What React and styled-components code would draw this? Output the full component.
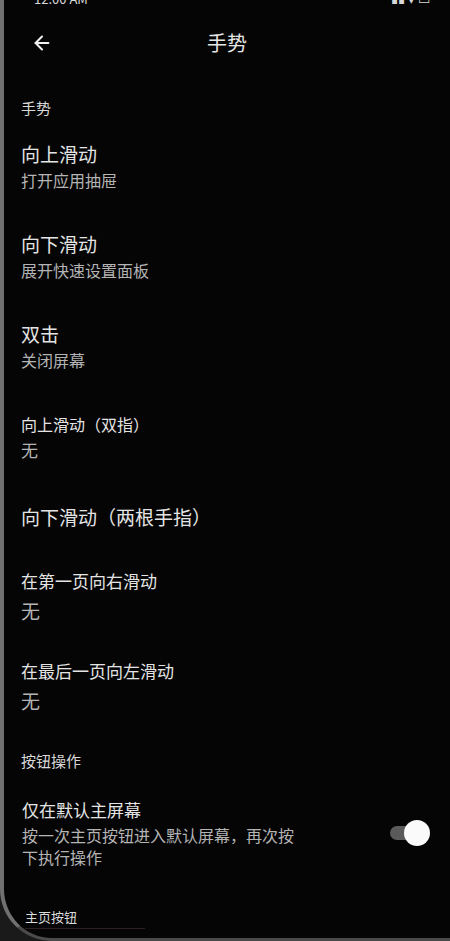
import styled, { createGlobalStyle } from "styled-components";
import { ArrowLeft } from "lucide-react";

const Global = createGlobalStyle`
  html, body {
    margin: 0;
    padding: 0;
    background: #1a1a1a;
  }
  * {
    box-sizing: border-box;
  }
`;

const Frame = styled.div`
  width: 450px;
  height: 941px;
  overflow: hidden;
  background: #050505;
  border-left: 4px solid #707070;
  border-bottom: 3px solid #4a4a4a;
  border-bottom-left-radius: 52px;
  font-family: "Noto Sans CJK SC", "Noto Sans", sans-serif;
  color: #e2e2e2;
  display: flex;
  flex-direction: column;
`;

// status bar is mostly cut off at the top of the shot
const StatusBar = styled.div`
  height: 4px;
  overflow: hidden;
  display: flex;
  align-items: flex-end;
  justify-content: space-between;
  padding: 0 20px 0 30px;
  font-size: 13px;
  line-height: 11px;
  color: #d8d8d8;
`;

const Header = styled.div`
  height: 77px;
  display: grid;
  grid-template-columns: 80px 1fr 80px;
  align-items: center;
`;

const BackButton = styled.div`
  display: flex;
  align-items: center;
  padding-left: 27px;
  color: #f0f0f0;
`;

const Title = styled.div`
  text-align: center;
  font-size: 20px;
  color: #e6e6e6;
`;

const SectionLabel = styled.div`
  padding: 0 17px;
  margin-top: ${(p) => p.$top}px;
  font-size: 15px;
  line-height: 20px;
  color: #d8d8d8;
`;

const Item = styled.div`
  display: flex;
  align-items: center;
  padding: ${(p) => p.$pad || "20px 20px 20px 17px"};
`;

const Texts = styled.div`
  flex: 1;
  display: flex;
  flex-direction: column;
`;

const ItemTitle = styled.div`
  font-size: ${(p) => p.$size || 19}px;
  line-height: 26px;
  color: #e4e4e4;
`;

const ItemSub = styled.div`
  margin-top: ${(p) => p.$gap ?? 2}px;
  font-size: ${(p) => p.$size || 16}px;
  line-height: 22px;
  color: #b4b4b4;
  max-width: ${(p) => p.$max || "none"};
`;

const Toggle = styled.div`
  position: relative;
  width: 40px;
  height: 26px;
  flex-shrink: 0;
  display: flex;
  align-items: center;
`;

const Track = styled.div`
  width: 34px;
  height: 14px;
  border-radius: 7px;
  background: #5a5a5a;
`;

const Knob = styled.div`
  position: absolute;
  right: 0;
  top: 0;
  width: 26px;
  height: 26px;
  border-radius: 50%;
  background: #fafafa;
`;

const Footer = styled.div`
  margin: 40px 0 0 21px;
  width: 120px;
  font-size: 13px;
  line-height: 18px;
  color: #dcdcdc;
  padding-bottom: 2px;
  border-bottom: 1px solid #2a2220;
`;

const items = [
  { title: "向上滑动", sub: "打开应用抽屉" },
  { title: "向下滑动", sub: "展开快速设置面板" },
  { title: "双击", sub: "关闭屏幕" },
  { title: "向上滑动（双指）", sub: "无", size: 16, subSize: 17 },
];

const App = () => {
  return (
    <>
      <Global />
      <Frame>
        <StatusBar>
          <span>12:00 AM</span>
          <span>▮▮ ▾ ▭</span>
        </StatusBar>
        <Header>
          <BackButton>
            <ArrowLeft size={22} strokeWidth={2.2} />
          </BackButton>
          <Title>手势</Title>
          <div />
        </Header>
        <SectionLabel $top={17}>手势</SectionLabel>
        <div style={{ height: 3 }} />
        {items.map((it) => (
          <Item key={it.title}>
            <Texts>
              <ItemTitle $size={it.size}>{it.title}</ItemTitle>
              <ItemSub $size={it.subSize}>{it.sub}</ItemSub>
            </Texts>
          </Item>
        ))}
        <Item $pad="23px 20px 18px 17px">
          <Texts>
            <ItemTitle>向下滑动（两根手指）</ItemTitle>
          </Texts>
        </Item>
        <Item $pad="20px 20px 16px 17px">
          <Texts>
            <ItemTitle $size={17}>在第一页向右滑动</ItemTitle>
            <ItemSub $size={19} $gap={6}>无</ItemSub>
          </Texts>
        </Item>
        <Item $pad="20px 20px 16px 17px">
          <Texts>
            <ItemTitle $size={17}>在最后一页向左滑动</ItemTitle>
            <ItemSub $size={19} $gap={6}>无</ItemSub>
          </Texts>
        </Item>
        <SectionLabel $top={23}>按钮操作</SectionLabel>
        <Item $pad="26px 20px 0 18px">
          <Texts>
            <ItemTitle $size={17}>仅在默认主屏幕</ItemTitle>
            <ItemSub $gap={1} $max="280px">
              按一次主页按钮进入默认屏幕，再次按下执行操作
            </ItemSub>
          </Texts>
          <Toggle>
            <Track />
            <Knob />
          </Toggle>
        </Item>
        <Footer>主页按钮</Footer>
      </Frame>
    </>
  );
};

export default App;
